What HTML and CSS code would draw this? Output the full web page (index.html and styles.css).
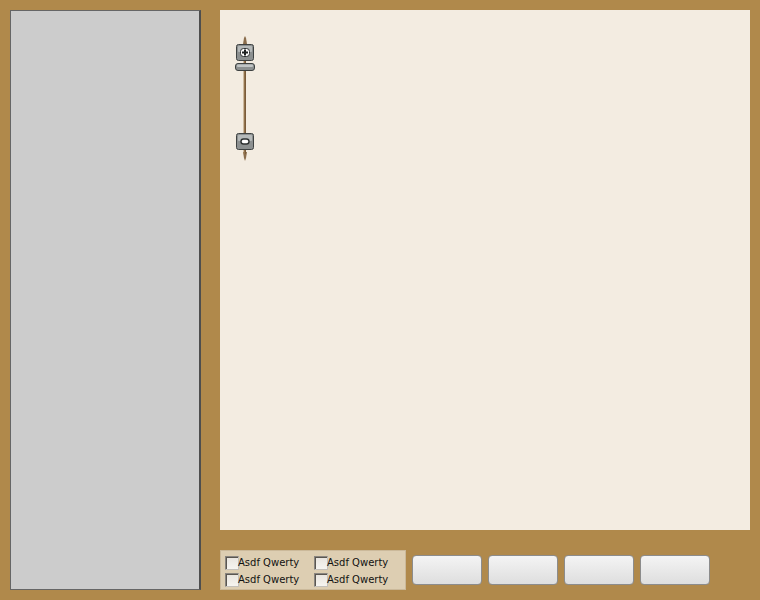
FILE: index.html
```html
<!DOCTYPE html>
<html>
<head>
<meta charset="utf-8">
<link rel="stylesheet" href="styles.css">
</head>
<body>
<div class="page">
  <aside class="sidebar"></aside>
  <main class="content">
    <section class="map">
      <div class="zoom">
        <svg width="24" height="126" viewBox="0 0 24 126">
          <path d="M10 8 L11 2 L12 0 L13 2 L14 8 Z" fill="#8a6d4c"/>
          <path d="M10 116 L14 116 L13 122 L12 125 L11 122 Z" fill="#8a6d4c"/>
          <rect x="11" y="8" width="2" height="110" fill="#7a5c3a"/>
          <rect x="10.5" y="8" width="1" height="110" fill="#a8885f"/>
          <rect x="3.5" y="8.5" width="17" height="16" rx="2" fill="#8c9090" stroke="#3e4242"/>
          <rect x="5" y="10" width="14" height="6" rx="1" fill="#b6baba"/>
          <rect x="7.5" y="12.5" width="9" height="8" rx="3" fill="#fff" stroke="#2e3232"/>
          <rect x="11" y="13.5" width="2" height="6" fill="#1e2222"/>
          <rect x="9" y="15.5" width="6" height="2" fill="#1e2222"/>
          <rect x="2.5" y="27.5" width="19" height="7" rx="2.5" fill="#8c9090" stroke="#3e4242"/>
          <rect x="4" y="28.5" width="16" height="2.5" rx="1" fill="#c2c6c6"/>
          <rect x="3.5" y="97.5" width="17" height="16" rx="2" fill="#8c9090" stroke="#3e4242"/>
          <rect x="5" y="99" width="14" height="6" rx="1" fill="#b6baba"/>
          <rect x="8" y="103" width="8" height="5" rx="2.5" fill="#fff" stroke="#2e3232" stroke-width="1.4"/>
        </svg>
      </div>
    </section>
    <footer class="toolbar">
      <div class="checks">
        <label class="check"><span class="box"></span>Asdf Qwerty</label>
        <label class="check"><span class="box"></span>Asdf Qwerty</label>
        <label class="check"><span class="box"></span>Asdf Qwerty</label>
        <label class="check"><span class="box"></span>Asdf Qwerty</label>
      </div>
      <div class="buttons">
        <button class="btn"></button>
        <button class="btn"></button>
        <button class="btn"></button>
        <button class="btn"></button>
      </div>
    </footer>
  </main>
</div>
</body>
</html>
```

FILE: styles.css
```css
html, body {
  margin: 0;
  padding: 0;
  background: #b0894b;
  font-family: "DejaVu Sans", Verdana, sans-serif;
}
.page {
  display: flex;
  padding: 10px;
  height: 580px;
}
.sidebar {
  width: 188px;
  height: 578px;
  background: #cccccc;
  border-top: 1px solid #666;
  border-left: 1px solid #666;
  border-right: 2px solid #4e4e4e;
  border-bottom: 1px solid #666;
}
.content {
  margin-left: 19px;
  width: 530px;
  display: flex;
  flex-direction: column;
}
.map {
  position: relative;
  height: 520px;
  background: #f3ece1;
}
.zoom {
  position: absolute;
  left: 13px;
  top: 26px;
  width: 24px;
  height: 126px;
}
.zoom svg { display: block; }
.toolbar {
  margin-top: 20px;
  display: flex;
  align-items: center;
  gap: 6px;
}
.checks {
  box-sizing: border-box;
  width: 186px;
  height: 40px;
  background: #ddceb2;
  border: 1px solid #cbb99a;
  display: grid;
  grid-template-columns: 89px 89px;
  grid-auto-rows: 17px;
  padding: 4px 0 0 4px;
}
.check {
  display: flex;
  align-items: center;
  font-size: 10px;
  color: #111;
  height: 15px;
  line-height: 13px;
}
.box {
  box-sizing: border-box;
  width: 14px;
  height: 14px;
  margin-right: -1px;
  border: 1px solid #8a8680;
  border-right-color: #c4c0ba;
  border-bottom-color: #c4c0ba;
  background: linear-gradient(#e8e4de, #f6f4f0);
  box-shadow: inset 1px 1px 0 #5a5650;
}
.buttons {
  display: flex;
  gap: 6px;
}
.btn {
  box-sizing: border-box;
  width: 70px;
  height: 30px;
  border: 1px solid #8c8c8c;
  border-radius: 4px;
  background: linear-gradient(#f4f4f4, #dedede);
  padding: 0;
}
```
